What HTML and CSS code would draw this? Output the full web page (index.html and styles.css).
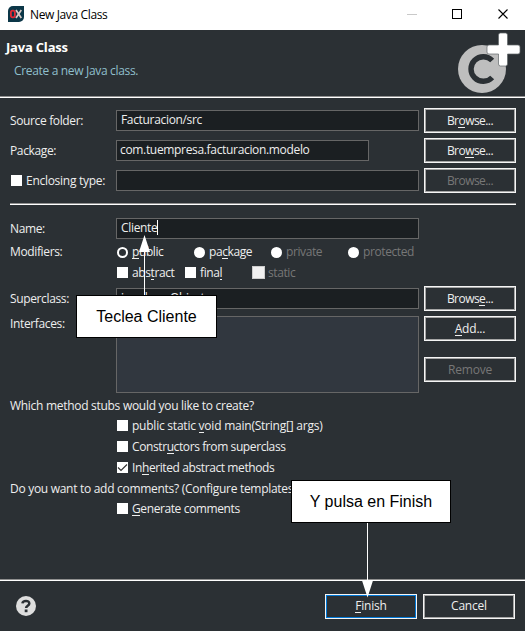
FILE: index.html
```html
<!DOCTYPE html>
<html lang="en">
<head>
<meta charset="utf-8">
<title>New Java Class</title>
<link rel="stylesheet" href="styles.css">
</head>
<body>
<div class="window">
  <div class="titlebar">
    <svg class="app-icon" width="16" height="16" viewBox="0 0 16 16"><path d="M5 0h11v11a5 5 0 0 1-5 5H0V5a5 5 0 0 1 5-5z" fill="#0c3748"/><rect x="2.9" y="4.6" width="4" height="6.8" rx="1.8" fill="none" stroke="#e02a35" stroke-width="1.8"/><path d="M8 4l5.3 8M13.3 4L8 12" stroke="#d8c9c5" stroke-width="1.7"/></svg>
    <span class="window-title">New Java Class</span>
    <svg class="controls" width="120" height="30" viewBox="0 0 120 30" shape-rendering="crispEdges"><path d="M2 14.5h10" stroke="#c9c9c9"/><path d="M47.500 9.500h9v9h-9z" fill="none" stroke="#000"/><path d="M93.500 9.500l9 9M102.500 9.500l-9 9" stroke="#000" stroke-width="1.100" shape-rendering="auto"/></svg>
  </div>
  <div class="header">
    <div class="header-text">
      <h1>Java Class</h1>
      <p>Create a new Java class.</p>
    </div>
    <svg class="class-icon" width="63" height="64" viewBox="0 0 63 64"><circle cx="24" cy="37" r="24" fill="#bebebe"/><path d="M34.200 28.500A12.300 12.300 0 1 0 34.200 45.500" fill="none" stroke="#2b3034" stroke-width="5.400"/><path d="M42.500 1h5a2 2 0 0 1 2 2v10H60a2 2 0 0 1 2 2v5a2 2 0 0 1-2 2H49.500v10a2 2 0 0 1-2 2h-5a2 2 0 0 1-2-2V22H31a2 2 0 0 1-2-2v-5a2 2 0 0 1 2-2h9.500V3a2 2 0 0 1 2-2z" fill="#fff" stroke="#62676a" stroke-width=".7"/></svg>
  </div>
  <div class="rule"></div>
  <div class="form">
    <div class="row"><span class="label">Source folder:</span><div class="field">Facturacion/src</div><button>Br<u>o</u>wse...</button></div>
    <div class="row"><span class="label">Package:</span><div class="field short">com.tuempresa.facturacion.modelo</div><button>Bro<u>w</u>se...</button></div>
    <div class="row"><span class="label check"><i class="box"></i><span>Enclosing type:</span></span><div class="field"></div><button class="off">Browse...</button></div>
    <div class="rule inner"></div>
    <div class="row name"><span class="label">Name:</span><div class="field">Cliente<i class="caret"></i></div></div>
    <div class="row modifiers"><span class="label">Modifiers:</span>
      <div class="options radios"><span class="check"><i class="dot picked"></i><span><u>p</u>ublic</span></span><span class="check"><i class="dot"></i><span>pa<u>c</u>kage</span></span><span class="check off"><i class="dot"></i><span>private</span></span><span class="check off"><i class="dot"></i><span>protected</span></span></div></div>
    <div class="row flags"><span></span>
      <div class="options boxes"><span class="check"><i class="box"></i><span>abs<u>t</u>ract</span></span><span class="check"><i class="box"></i><span>fina<u>l</u></span></span><span class="check off static"><i class="box"></i><span>static</span></span></div></div>
    <div class="row super"><span class="label">Superclass:</span><div class="field">java.lang.Object</div><button>Brows<u>e</u>...</button></div>
    <div class="row interfaces"><span class="label">Interfaces:</span><div class="list"></div><div class="stack"><button><u>A</u>dd...</button><button class="off">Remove</button></div></div>
    <p class="question q1">Which method stubs would you like to create?</p>
    <div class="check stub"><i class="box"></i><span class="wide">public static <u>v</u>oid main(String[] args)</span></div>
    <div class="check stub"><i class="box"></i><span>Constr<u>u</u>ctors from superclass</span></div>
    <div class="check stub"><i class="box"><svg width="11" height="11" viewBox="0 0 11 11"><path d="M1 5.500l3 3 6-6" fill="none" stroke="#333" stroke-width="1.200"/></svg></i><span>In<u>h</u>erited abstract methods</span></div>
    <p class="question q2">Do you want to add comments? (Configure templates</p>
    <div class="check stub"><i class="box"></i><span><u>G</u>enerate comments</span></div>
  </div>
  <div class="rule"></div>
  <div class="footer">
    <svg width="20" height="20" viewBox="0 0 20 20"><circle cx="10" cy="10" r="10" fill="#dedede"/><path d="M6.400 7.400C6.800 4.300 13.300 4.100 13.300 7.400c0 2.400-3.200 2.200-3.200 4.700" fill="none" stroke="#2b3034" stroke-width="2.500"/><path d="M8.700 13.500h2.800v2.700H8.700z" fill="#2b3034"/></svg>
    <div class="actions"><button class="primary"><u>F</u>inish</button><button>Cancel</button></div>
  </div>
  <svg class="arrows" width="525" height="631" viewBox="0 0 525 631"><path d="M144.500 296V250M367.500 522v60" stroke="#fff"/><path d="M144.500 235l5.500 17h-11zM367.500 597.500l-5.500-17h11z" fill="#fff"/></svg>
  <div class="note note-name">Teclea Cliente</div>
  <div class="note note-finish">Y pulsa en Finish</div>
</div>
</body>
</html>
```
FILE: styles.css
```css
* { box-sizing: border-box; }
body { margin: 0; font: 12px/16px "Open Sans", "Noto Sans", sans-serif; color: #eee; }
h1, p { margin: 0; }
u { text-decoration: none; box-shadow: inset 0 -1px 0 currentColor; display: inline-block; height: 15px; line-height: 16px; }
.window { position: relative; width: 525px; height: 631px; overflow: hidden; background: #2b3034; white-space: nowrap; display: flex; flex-direction: column; }
.titlebar { height: 30px; flex: none; background: #fff; color: #000; display: flex; align-items: center; padding-left: 8px; }
.app-icon { margin-top: -2px; }
.window-title { margin-left: 6px; letter-spacing: -.37px; }
.controls { margin-left: auto; margin-right: 0; }
.header { height: 66px; flex: none; display: flex; justify-content: space-between; padding: 2px 4px 0 6px; }
h1 { font-size: 13px; line-height: 18px; letter-spacing: -.2px; margin-top: 6px; color: #fff; }
.header p { color: #8fbfcc; margin: 7px 0 0 8px; letter-spacing: -.33px; }
.rule { height: 2px; flex: none; background: #fff; border-top: 1px solid #8f8f8f; }
.form { height: 481px; flex: none; padding: 10px 9px 0 10px; }
.row { display: grid; grid-template-columns: 101px 303px 92px; column-gap: 5px; height: 25px; margin-bottom: 5px; align-items: center; letter-spacing: -.36px; }
.field { height: 21px; background: #1b1f22; border: 1px solid #666; padding: 0 4px; line-height: 17px; display: flex; letter-spacing: -.33px; }
.field.short { width: 253px; padding-left: 3px; }
.caret { width: 1px; height: 15px; background: #fff; margin-top: 1px; }
button { width: 92px; height: 25px; background: #2b3034; border: 1px solid #f5f5f5; box-shadow: inset 0 0 0 1px #a5a5a5; font: inherit; color: #eee; padding: 0; letter-spacing: -.55px; border-radius: 0; line-height: 16px; }
.off, button.off { color: #777; }
button.primary { box-shadow: inset 0 0 0 1px #0078d7; }
.footer button, .stack button { letter-spacing: -.2px; }
.check { display: flex; align-items: center; gap: 4px; letter-spacing: -.4px; }
.label.check { letter-spacing: -.28px; }
.box { width: 11px; height: 11px; background: #fff; flex: none; margin-left: 1px; }
.box svg { display: block; }
.inner { margin: 10px 0 13px; }
.row.name { height: 21px; margin-bottom: 3px; }
.row.modifiers { height: 20px; margin: 0; }
.row.flags { height: 21px; margin: 0 0 3px; }
.dot { width: 11px; height: 11px; border-radius: 50%; background: #fff; flex: none; margin: 0 0 0 1px; }
.picked { background: #2b3034; border: 2px solid #fff; }
.options { display: grid; }
.radios { grid-template-columns: 77px 77px 77px 72px; }
.boxes { grid-template-columns: 68px 67px 100px; }
.static .box { width: 13px; height: 13px; border: 1px solid #ccc; background: #f0f0f0; }
.static { gap: 3px; }
.row.interfaces { height: 77px; margin-bottom: 3px; align-items: start; }
.list { height: 77px; border: 1px solid #666; background: #31373f; }
.stack { display: flex; flex-direction: column; gap: 16px; }
.question { height: 20px; line-height: 20px; letter-spacing: -.29px; margin-bottom: -1px; }
.stub { height: 21px; margin-left: 106px; }
.stub .wide { letter-spacing: -.23px; }
.q2 { height: 21px; line-height: 21px; }
.footer { height: 50px; display: flex; justify-content: space-between; align-items: center; padding: 0 10px 0 16px; }
.actions { display: flex; gap: 6px; }
.arrows { position: absolute; left: 0; top: 0; }
.note { position: absolute; background: #fff; border: 1px solid #000; color: #000; font: 16px/41px "Liberation Sans", sans-serif; text-align: center; height: 43px; }
.note-name { left: 76px; top: 295px; width: 141px; }
.note-finish { left: 291px; top: 480px; width: 160px; }
```
